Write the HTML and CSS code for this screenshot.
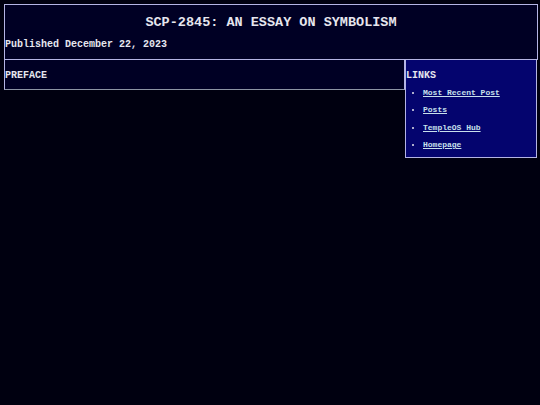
FILE: index.html
```html
<!DOCTYPE html>
<html>
<head>
  <title>SCP-2845: An Essay on Symbolism</title>
  <link rel="stylesheet" href="styles.css">
</head>
<body>
  <!-- HEADER -->
  <div class="header">
    <h1>SCP-2845: AN ESSAY ON SYMBOLISM</h1>
    <p class="date">Published December 22, 2023</p>
  </div>

  <div class="layout">
    <!-- Main article -->
    <div class="main">
      <h2>PREFACE</h2>
    </div>

    <!-- Sidebar links -->
    <div class="sidebar">
      <h2>LINKS</h2>
      <ul>
        <li><a href="#">Most Recent Post</a></li>
        <li><a href="#">Posts</a></li>
        <li><a href="#">TempleOS Hub</a></li>
        <li><a href="#">Homepage</a></li>
      </ul>
    </div>
  </div>
</body>
</html>
```

FILE: styles.css
```css
body {
  margin: 4px 2px 4px 4px;
  background-color: #000010;
  color: #e6e6ee;
  font-family: "Liberation Mono", "Courier New", monospace;
  font-weight: bold;
}
h1, h2, p, ul { margin: 0; }

.header {
  background-color: #000024;
  border: 1px solid #b4b4e4;
  padding: 10px 0 8px 0;
}
.header h1 {
  font-size: 13.5px;
  line-height: 15px;
  text-align: center;
}
.header .date {
  font-size: 10px;
  line-height: 12px;
  margin-top: 9px;
}

.layout {
  display: flex;
  align-items: flex-start;
}
.main {
  width: calc(75% - 1.5px);
  flex-shrink: 0;
  background-color: #000024;
  border: 1px solid #b4b4e4;
  border-top: none;
  border-bottom-color: #8c94a4;
  padding: 10px 0 7px 0;
}
.sidebar {
  flex: 1;
  margin-right: 1px;
  background-color: #04046e;
  border: 1px solid #b4b4e4;
  border-top: none;
  padding: 10px 0 7px 0;
}
h2 {
  font-size: 10px;
  line-height: 12px;
}
.sidebar ul {
  padding-left: 17px;
  font-size: 8px;
  line-height: 10px;
}
.sidebar li { margin-top: 7.5px; }
.sidebar li:first-child { margin-top: 5.5px; }
.sidebar a { color: #c8e0ec; }
```
